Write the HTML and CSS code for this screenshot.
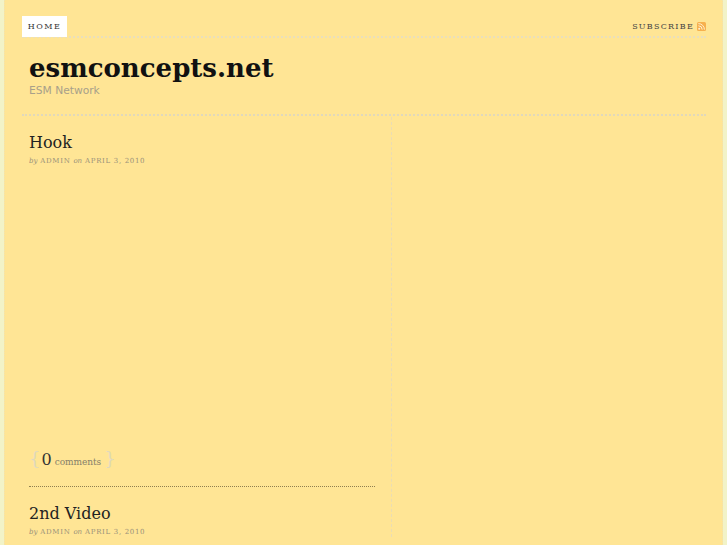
FILE: index.html
```html
<!DOCTYPE html>
<html lang="en">
<head>
<meta charset="utf-8">
<title>esmconcepts.net</title>
<link rel="stylesheet" href="styles.css">
</head>
<body>
<div class="page">
  <nav class="nav">
    <a class="tab" href="#">HOME</a>
    <a class="subscribe" href="#">SUBSCRIBE
      <svg class="rss" width="9" height="9" viewBox="0 0 9 9"><rect width="9" height="9" rx="1.5" fill="#f7b04e"/><circle cx="2.2" cy="6.8" r="1" fill="#fff0d0"/><path d="M1.4 3.8a3.8 3.8 0 0 1 3.8 3.8M1.4 1.6a6 6 0 0 1 6 6" fill="none" stroke="#fff0d0" stroke-width="1"/></svg>
    </a>
  </nav>
  <header class="masthead">
    <h1 class="site-title">esmconcepts.net</h1>
    <p class="tagline">ESM Network</p>
  </header>
  <div class="columns">
    <main class="content">
      <article class="post first">
        <h2 class="post-title">Hook</h2>
        <p class="meta"><em>by</em> ADMIN <em>on</em> APRIL 3, 2010</p>
        <div class="post-body"></div>
        <p class="comments"><span class="brace">{</span> <span class="count">0</span> <span class="label">comments</span> <span class="brace">}</span></p>
      </article>
      <article class="post">
        <h2 class="post-title">2nd Video</h2>
        <p class="meta"><em>by</em> ADMIN <em>on</em> APRIL 3, 2010</p>
      </article>
    </main>
    <aside class="sidebar"></aside>
  </div>
</div>
</body>
</html>
```
FILE: styles.css
```css
html, body { margin: 0; padding: 0; height: 100%; overflow: hidden; }
body { background: #f2f3c8; font-family: "DejaVu Serif", serif; }
.page {
  box-sizing: border-box;
  margin: 0 4px;
  height: 545px;
  padding: 16px 16px 0 17px;
  background: #ffe595;
  border-left: 1px dotted #efe3b0;
  border-right: 1px dotted #efe3b0;
}
.nav {
  display: flex;
  justify-content: space-between;
  align-items: flex-start;
  height: 20px;
  border-bottom: 2px dotted #e9dfbc;
}
.tab {
  box-sizing: border-box;
  height: 21px;
  width: 45px;
  background: #fff;
  color: #333;
  font-size: 8px;
  line-height: 21px;
  letter-spacing: 1.45px;
  text-align: center;
  text-decoration: none;
}
.subscribe {
  display: flex;
  align-items: center;
  gap: 3px;
  height: 20px;
  color: #444;
  font-size: 8px;
  letter-spacing: 1.25px;
  text-decoration: none;
}
.masthead { padding: 14px 7px 17px; border-bottom: 2px dotted #e0d8bc; margin-bottom: 1px; }
.site-title { margin: 0; font-size: 26px; line-height: 32px; font-weight: 700; color: #111; }
.tagline { margin: 0; font-family: "DejaVu Sans", sans-serif; font-size: 10.7px; line-height: 13px; color: #a8a08a; }
.columns { display: flex; }
.content {
  box-sizing: border-box;
  width: 370px;
  padding: 0 16px 0 7px;
  border-right: 1px dashed #eadcb4;
}
.post { padding-top: 16px; }
.post.first { padding-top: 15px; padding-bottom: 12px; border-bottom: 1px dotted #8f7f50; }
.post-title { margin: 0; font-size: 16px; line-height: 22px; font-weight: 400; color: #222; }
.meta { margin: 2px 0 0; font-size: 7px; line-height: 10px; letter-spacing: .68px; color: #99917a; }
.meta em { letter-spacing: 0; font-size: 7px; }
.post-body { height: 281px; }
.comments { margin: 0; line-height: 24px; color: #555; display: flex; align-items: baseline; }
.brace { font-size: 18px; color: #e0d9bd; }
.count { font-size: 16px; color: #333; margin: 0 3px 0 1px; }
.label { font-size: 9px; color: #85806a; margin-right: 3px; letter-spacing: -.05px; }
.sidebar { flex: 1; }
```
